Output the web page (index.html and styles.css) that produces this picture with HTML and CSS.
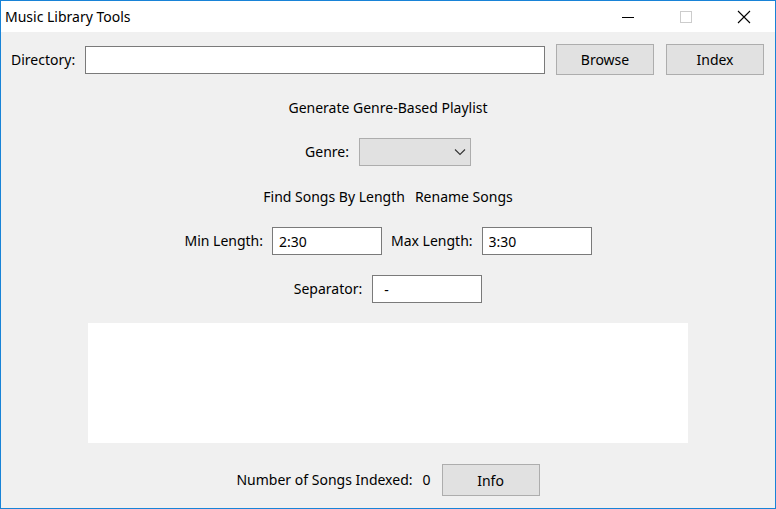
FILE: index.html
```html
<!DOCTYPE html>
<html>
<head>
<meta charset="utf-8">
<title>Music Library Tools</title>
<link rel="stylesheet" href="styles.css">
</head>
<body>
<div class="window">
  <div class="titlebar">
    <span class="title">Music Library Tools</span>
    <div class="caption">
      <span class="cbtn">
        <svg width="14" height="14" viewBox="0 0 14 14"><path d="M1 7.5H13" stroke="#000" stroke-width="1"/></svg>
      </span>
      <span class="cbtn">
        <svg width="14" height="14" viewBox="0 0 14 14"><rect x="1.5" y="1.5" width="11" height="11" fill="none" stroke="#cccccc" stroke-width="1"/></svg>
      </span>
      <span class="cbtn">
        <svg width="14" height="14" viewBox="0 0 14 14"><path d="M1 1L13 13M13 1L1 13" stroke="#000" stroke-width="1.1"/></svg>
      </span>
    </div>
  </div>
  <div class="client">
    <div class="dir-row">
      <span class="lbl">Directory:</span>
      <input class="tbox dir-input" type="text" value="">
      <button class="btn btn-browse">Browse</button>
      <button class="btn btn-index">Index</button>
    </div>
    <div class="row heading">Generate Genre-Based Playlist</div>
    <div class="row genre-row">
      <span class="lbl">Genre:</span>
      <div class="combo">
        <svg width="12" height="8" viewBox="0 0 12 8"><path d="M1 1.5L6 6.5L11 1.5" fill="none" stroke="#333" stroke-width="1.1"/></svg>
      </div>
    </div>
    <div class="row tabs-row">
      <span>Find Songs By Length</span>
      <span>Rename Songs</span>
    </div>
    <div class="row len-row">
      <span class="lbl">Min Length:</span>
      <input class="tbox small" type="text" value="2:30">
      <span class="lbl">Max Length:</span>
      <input class="tbox small" type="text" value="3:30">
    </div>
    <div class="row sep-row">
      <span class="lbl">Separator:</span>
      <input class="tbox small sep" type="text" value="-">
    </div>
    <div class="listbox"></div>
    <div class="row status-row">
      <span class="lbl">Number of Songs Indexed:</span>
      <span class="lbl count">0</span>
      <button class="btn btn-info">Info</button>
    </div>
  </div>
</div>
</body>
</html>
```

FILE: styles.css
```css
* { box-sizing: border-box; }
html, body { margin: 0; padding: 0; }
body {
  font-family: "Noto Sans", "Liberation Sans", sans-serif;
  font-size: 14px;
  color: #000;
  background: #f0f0f0;
}
.window {
  width: 776px;
  height: 509px;
  border: 1px solid #1883d7;
  display: flex;
  flex-direction: column;
  background: #f0f0f0;
}
.titlebar {
  height: 31px;
  background: #fff;
  display: flex;
  align-items: center;
  padding-left: 4px;
  flex: none;
}
.title {
  flex: 1;
  line-height: 20px;
}
.caption {
  display: flex;
  padding-right: 2px;
  height: 100%;
}
.cbtn {
  width: 58px;
  height: 100%;
  display: flex;
  align-items: center;
  justify-content: center;
}
.client {
  flex: 1;
  display: flex;
  flex-direction: column;
  align-items: center;
  padding-top: 12px;
}
.dir-row {
  align-self: stretch;
  display: flex;
  align-items: center;
  padding: 0 11px 0 10px;
  height: 31px;
}
.lbl { line-height: 20px; white-space: nowrap; }
.tbox {
  height: 28px;
  border: 1px solid #7a7a7a;
  background: #fff;
  font-family: "Noto Sans", "Liberation Sans", sans-serif;
  font-size: 14px;
  color: #000;
  padding: 0 6px;
  margin: 0;
  outline: none;
}
.dir-input { flex: 1; margin-left: 10px; min-width: 0; }
.btn {
  width: 98px;
  height: 31px;
  background: #e1e1e1;
  border: 1px solid #adadad;
  font-family: "Noto Sans", "Liberation Sans", sans-serif;
  font-size: 14px;
  color: #000;
  padding: 0;
  margin: 0;
}
.btn-browse { margin-left: 11px; }
.btn-index { margin-left: 12px; }
.row {
  display: flex;
  align-items: center;
  justify-content: center;
  gap: 10px;
}
.heading { margin-top: 22px; line-height: 20px; padding-top: 1px; height: 20px; }
.genre-row { margin-top: 21px; height: 28px; }
.combo {
  width: 112px;
  height: 28px;
  background: #e1e1e1;
  border: 1px solid #adadad;
  display: flex;
  align-items: center;
  justify-content: flex-end;
  padding-right: 4px;
}
.tabs-row { margin-top: 20px; line-height: 20px; padding-top: 1px; height: 20px; }
.len-row { margin-top: 21px; height: 28px; gap: 9px; }
.small { width: 110px; }
.sep-row { margin-top: 20px; height: 28px; }
.sep { padding-left: 11px; }
.listbox {
  margin-top: 20px;
  width: 600px;
  height: 120px;
  background: #fff;
}
.status-row { margin-top: 21px; height: 32px; }
.btn-info { height: 32px; margin-left: 1px; }
```
